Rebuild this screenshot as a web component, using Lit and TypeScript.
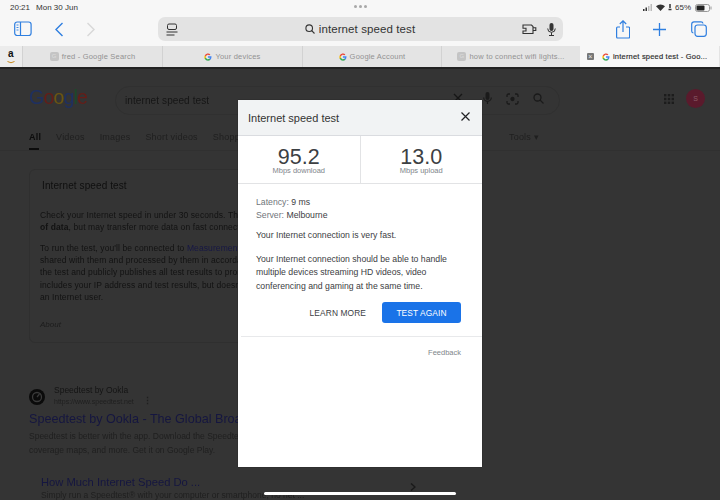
import { LitElement, html, css, svg } from "lit";
import { customElement } from "lit/decorators.js";

const gIcon = svg`<svg class="g" viewBox="0 0 24 24"><path fill="#4285f4" d="M22.5 12.2c0-.8-.1-1.500-.2-2.200H12v4.200h5.900a5 5 0 0 1-2.200 3.300v2.700h3.500c2.100-1.900 3.300-4.700 3.300-8z"/><path fill="#34a853" d="M12 23c3 0 5.400-1 7.200-2.700l-3.500-2.700c-1 .7-2.200 1.100-3.700 1.100-2.800 0-5.200-1.900-6.100-4.500H2.300V17A11 11 0 0 0 12 23z"/><path fill="#fbbc05" d="M5.900 14.200a6.600 6.600 0 0 1 0-4.200V7.200H2.300a11 11 0 0 0 0 9.900z"/><path fill="#ea4335" d="M12 5.400c1.600 0 3 .6 4.100 1.600l3.100-3.100A11 11 0 0 0 2.300 7.200l3.600 2.800C6.800 7.300 9.200 5.400 12 5.400z"/></svg>`;

@customElement("app-root")
export class AppRoot extends LitElement {
  static styles = css`
    :host { display: block; width: 720px; height: 500px; position: relative; overflow: hidden; font-family: "Liberation Sans", Arial, sans-serif; background: #343434; }
    .chrome { background: #f7f7f7; height: 46px; display: flex; flex-direction: column; }
    .status { height: 15px; display: flex; align-items: center; justify-content: space-between; padding: 0 8px 0 10px; font-size: 8px; color: #333; position: relative; }
    .status .left { display: flex; gap: 6px; }
    .dots { position: absolute; left: 354px; top: 5px; display: flex; gap: 2px; }
    .dots i { width: 3px; height: 3px; border-radius: 50%; background: #a8a8a8; }
    .status .right { display: flex; align-items: center; gap: 2px; color: #333; }
    .status .right span { margin-right: 2px; }
    .toolbar { display: flex; align-items: center; height: 28px; padding: 0 0 3px 14px; }
    .back { margin-left: 23px; }
    .fwd { margin-left: 22px; }
    .url { margin-left: 63px; width: 405px; height: 24px; border-radius: 7px; background: #e3e3e3; display: flex; align-items: center; padding: 0 7px 0 8px; box-sizing: border-box; font-size: 11.500px; color: #333; }
    .url .center { flex: 1; display: flex; align-items: center; justify-content: center; gap: 4px; padding-left: 20px; letter-spacing: 0.1px; }
    .url .end { display: flex; align-items: center; gap: 10px; }
    .actions { margin-left: 53px; display: flex; align-items: center; gap: 23px; }
    .actions svg:last-child { margin-left: 2px; }
    .tabs { display: flex; height: 21px; background: #e4e4e4; font-size: 7.500px; color: #929292; letter-spacing: 0.2px; }
    .tab { display: flex; align-items: center; justify-content: center; gap: 3px; border-left: 1px solid #d2d2d2; box-sizing: border-box; width: 140px; }
    .tab.amz { width: 22px; border-left: none; background: #ececec; font-weight: bold; color: #111; font-size: 10px; flex-direction: column; line-height: 8px; }
    .tab.amz svg { display: block; }
    .tab.wide { width: 139px; }
    .tab.active { width: 139px; background: #f7f7f7; color: #2a2a2a; border-left: none; justify-content: flex-start; padding-left: 7px; -webkit-text-stroke: 0.15px #2a2a2a; white-space: nowrap; }
    .tab.active .x { width: 7px; height: 7px; background: #777; border-radius: 1px; margin-right: 5px; color: #eee; font-size: 7px; line-height: 7px; text-align: center; -webkit-text-stroke: 0; }
    .g { width: 8px; height: 8px; flex: none; }
    .gray-fav { width: 9px; height: 9px; background: #c4c4c4; border-radius: 2px; color: #ddd; font-size: 6px; line-height: 9px; text-align: center; }
    .sep { height: 2px; background: #222; }

    .page { height: 432px; color: #1d1d1d; filter: blur(0.25px); overflow: hidden; padding-left: 29px; box-sizing: border-box; }
    .top { display: flex; align-items: center; height: 54px; padding-top: 4px; }
    .logo { font-size: 19.500px; letter-spacing: -0.8px; width: 86px; line-height: 1; flex: none; margin-top: -4px; }
    .logo span:nth-child(1), .logo span:nth-child(4) { color: #1f3060; }
    .logo span:nth-child(2), .logo span:nth-child(6) { color: #651d18; }
    .logo span:nth-child(3) { color: #6b5612; }
    .logo span:nth-child(5) { color: #1c4a2a; }
    .query { font-size: 10px; letter-spacing: 0.1px; color: #161616; box-sizing: border-box; width: 445px; height: 29px; line-height: 27px; padding-left: 9px; border: 1px solid #303030; border-radius: 15px; flex: none; }
    .top-icons { position: absolute; left: 483px; top: 92px; display: flex; align-items: center; gap: 14px; }
    .qx { position: absolute; left: 453px; top: 93px; }
    .apps { position: absolute; left: 664px; top: 94px; }
    .avatar { position: absolute; left: 686px; top: 89px; width: 19px; height: 19px; border-radius: 50%; background: #5a1a2c; color: #8a5a68; font-size: 7px; display: flex; align-items: center; justify-content: center; }
    .nav { display: flex; gap: 15px; font-size: 9px; color: #1f1f1f; letter-spacing: 0.2px; height: 19px; padding-bottom: 4px; align-items: center; position: relative; }
    .nav b { font-weight: bold; color: #0c0c0c; position: relative; }
    .nav b::after { content: ""; position: absolute; left: 0; width: 10px; height: 2px; top: 16px; background: #0c0c0c; }
    .tools { position: absolute; left: 480px; }
    .rule { height: 1px; background: #303030; margin: 0 0 0 -29px; }
    .card { margin-top: 18px; width: 430px; height: 174px; border: 1px solid #2f2f2f; border-radius: 6px; box-sizing: border-box; padding: 10px 10px 0 10px; font-size: 8.500px; color: #121212; white-space: nowrap; overflow: hidden; }
    .card h3 { font-weight: normal; font-size: 10px; margin: 0 0 0 2px; line-height: 12px; padding-bottom: 17px; color: #0f0f0f; letter-spacing: 0.1px; }
    .card p { margin: 0 0 8.600px; line-height: 12.200px; letter-spacing: 0.1px; }
    .card a { color: #161744; }
    .about { font-style: italic; font-size: 8px; margin-top: 17px; color: #1c1c1c; }
    .result { margin-top: 43px; display: flex; gap: 9px; align-items: center; height: 21px; }
    .logo-o { width: 16px; height: 16px; flex: none; }
    .site { font-size: 8.500px; line-height: 11px; color: #141414; margin-top: -2px; }
    .site small { display: flex; align-items: center; gap: 9px; font-size: 7px; color: #1f1f1f; line-height: 11px; }
    .dotsv { display: inline-block; font-size: 9px; font-weight: bold; line-height: 7px; width: 2px; }
    .title { font-size: 12.600px; color: #151640; margin-top: 4px; line-height: 16px; white-space: nowrap; }
    .desc { font-size: 8.500px; line-height: 13.500px; color: #1f1f1f; white-space: nowrap; margin-top: 3px; }
    .sub { margin: 18px 0 0 12px; font-size: 11.200px; color: #151640; line-height: 14px; }
    .sub + div { margin-left: 12px; font-size: 8.500px; color: #1f1f1f; line-height: 13px; white-space: nowrap; }
    .chev { position: absolute; left: 410px; top: 483px; }

    .modal { position: absolute; left: 238px; top: 100px; width: 244px; height: 367px; background: #fff; color: #3c4043; box-shadow: 0 0 1px rgba(0,0,0,.5); display: flex; flex-direction: column; }
    .mhead { height: 36px; flex: none; background: #f1f3f4; border-bottom: 1px solid #dadce0; display: flex; align-items: center; justify-content: space-between; padding: 1px 12px 0 10px; box-sizing: border-box; font-size: 11px; color: #333; }
    .mhead svg { margin-top: -4px; }
    .speeds { display: flex; height: 48px; flex: none; border-bottom: 1px solid #e2e3e5; box-sizing: border-box; }
    .speed { flex: 1; display: flex; flex-direction: column; align-items: center; padding-top: 12px; }
    .speed + .speed { border-left: 1px solid #e2e3e5; }
    .speed strong { font-weight: normal; font-size: 21.500px; line-height: 18px; color: #3c4043; }
    .speed span { font-size: 7.500px; line-height: 9px; color: #80868b; }
    .mbody { padding: 12px 18px 0; font-size: 8.700px; line-height: 12.500px; color: #3c4043; flex: none; }
    .mbody p { margin: 0; }
    .mbody .k { color: #70757a; }
    .mbody .mt1 { margin-top: 8px; }
    .mbody .mt2 { margin-top: 11px; line-height: 13.500px; }
    .btns { display: flex; justify-content: flex-end; align-items: center; gap: 16px; padding: 9px 21px 0 0; height: 21px; flex: none; box-sizing: content-box; }
    .learn { font-size: 8.400px; color: #3c4043; letter-spacing: 0.1px; }
    .again { width: 79px; height: 21px; border-radius: 3px; background: #1a73e8; color: #fff; font-size: 8.400px; display: flex; align-items: center; justify-content: center; letter-spacing: 0.1px; }
    .mdiv { height: 1px; background: #e8e9eb; margin: 13px 0 0 3px; flex: none; }
    .feedback { text-align: right; padding: 11px 21px 0 0; font-size: 7.500px; color: #80868b; }
    .home { position: absolute; left: 264px; top: 492px; width: 192px; height: 3px; border-radius: 2px; background: #fff; }
  `;

  render() {
    const blue = "#2f7fe0";
    return html`
      <div class="chrome">
        <div class="status">
          <div class="left"><span>20:21</span><span>Mon 30 Jun</span></div>
          <div class="dots"><i></i><i></i><i></i></div>
          <div class="right">
            <svg width="11" height="7" viewBox="0 0 11 7"><rect x="0" y="5" width="1.500" height="2" fill="#333"/><rect x="2.500" y="3.500" width="1.500" height="3.500" fill="#333"/><rect x="5" y="2" width="1.500" height="5" fill="#bbb"/><rect x="7.500" y="0" width="1.500" height="7" fill="#bbb"/></svg>
            <svg width="9" height="7" viewBox="0 0 9 7"><path d="M4.500 7 0 2.300a6.500 6.500 0 0 1 9 0z" fill="#333"/></svg>
            <svg width="6" height="7" viewBox="0 0 6 7"><path d="M3 0v4M1.500 5.500h3" stroke="#333" stroke-width="1.500" fill="none"/></svg>
            <span>65%</span>
            <svg width="17" height="8" viewBox="0 0 17 8"><rect x=".5" y=".5" width="14" height="7" rx="2" fill="none" stroke="#999"/><rect x="1.500" y="1.500" width="8" height="5" rx="1" fill="#222"/><rect x="15.500" y="2.500" width="1" height="3" fill="#999"/></svg>
          </div>
        </div>
        <div class="toolbar">
          <svg width="18" height="16" viewBox="0 0 18 16" fill="none" stroke="${blue}" stroke-width="1.200"><rect x=".7" y="1" width="16.400" height="13.500" rx="2.500"/><path d="M6.500 1v13.500"/><path d="M2.500 4h2M2.500 6.500h2M2.500 9h2" stroke-width=".9"/></svg>
          <svg class="back" width="9" height="15" viewBox="0 0 9 15" fill="none" stroke="${blue}" stroke-width="1.400"><path d="M7.500 1 1 7.500 7.500 14"/></svg>
          <svg class="fwd" width="9" height="15" viewBox="0 0 9 15" fill="none" stroke="#d8d8d8" stroke-width="1.400"><path d="M1.500 1 8 7.500 1.500 14"/></svg>
          <div class="url">
            <svg width="12" height="13" viewBox="0 0 12 13" fill="none" stroke="#333" stroke-width="1"><rect x="1.500" y="1" width="9" height="5.500" rx="1.500"/><path d="M.5 9h11M.5 12h8"/></svg>
            <div class="center">
              <svg width="10" height="10" viewBox="0 0 10 10" fill="none" stroke="#333" stroke-width="1.100"><circle cx="4.200" cy="4.200" r="3.300"/><path d="m6.700 6.700 2.800 2.800"/></svg>
              <span>internet speed test</span>
            </div>
            <div class="end">
              <svg width="15" height="11" viewBox="0 0 15 11" fill="none" stroke="#333" stroke-width="1.100"><path d="M1 1h8.500L11 2.500V9.500H1V7h3V4.200H1z"/><path d="M11 3.800h2.800v2.700H11"/></svg>
              <svg width="9" height="13" viewBox="0 0 9 13"><rect x="2.500" y="0" width="4" height="8" rx="2" fill="#333"/><path d="M.7 5.500a3.800 3.800 0 0 0 7.600 0M4.500 9.500V12M2 12.500h5" fill="none" stroke="#333"/></svg>
            </div>
          </div>
          <div class="actions">
            <svg width="14" height="19" viewBox="0 0 14 19" fill="none" stroke="${blue}" stroke-width="1.200"><path d="M7 12V1M3.800 4 7 .8 10.200 4"/><path d="M4 7H1.500a1 1 0 0 0-.9 1v9a1 1 0 0 0 1 1h11a1 1 0 0 0 1-1V8a1 1 0 0 0-1-1H10"/></svg>
            <svg width="13" height="13" viewBox="0 0 13 13" fill="none" stroke="${blue}" stroke-width="1.300"><path d="M6.500 0v13M0 6.500h13"/></svg>
            <svg width="16" height="16" viewBox="0 0 16 16" fill="none" stroke="${blue}" stroke-width="1.200"><rect x="4" y="4" width="11.300" height="11.300" rx="2.500"/><path d="M12 2.500A2 2 0 0 0 10 .8H3A2.400 2.400 0 0 0 .7 3v7a2 2 0 0 0 1.700 2"/></svg>
          </div>
        </div>
      </div>
      <div class="tabs">
        <div class="tab amz"><span>a</span><svg width="8" height="3" viewBox="0 0 8 3"><path d="M.5 .5q3.500 2.500 7 0" stroke="#c98a1e" fill="none"/></svg></div>
        <div class="tab"><span class="gray-fav">G</span>fred - Google Search</div>
        <div class="tab">${gIcon}Your devices</div>
        <div class="tab wide">${gIcon}Google Account</div>
        <div class="tab wide"><span class="gray-fav">G</span>how to connect wifi lights...</div>
        <div class="tab active"><span class="x">×</span>${gIcon}<span>internet speed test - Goo...</span></div>
      </div>
      <div class="sep"></div>

      <div class="page">
        <div class="top">
          <div class="logo"><span>G</span><span>o</span><span>o</span><span>g</span><span>l</span><span>e</span></div>
          <div class="query">internet speed test</div>
        </div>
        <div class="nav">
          <b>All</b><span>Videos</span><span>Images</span><span>Short videos</span><span>Shopping</span>
          <span class="tools">Tools ▾</span>
        </div>
        <div class="rule"></div>
        <div class="card">
          <h3>Internet speed test</h3>
          <p>Check your Internet speed in under 30 seconds. The test uses less than<br /><b>of data</b>, but may transfer more data on fast connections.</p>
          <p>To run the test, you'll be connected to <a>Measurement Lab</a> and your IP address is<br />shared with them and processed by them in accordance with their privacy policy.<br />the test and publicly publishes all test results to promote Internet research. This<br />includes your IP address and test results, but doesn't include any information about<br />an Internet user.</p>
          <div class="about">About</div>
        </div>
        <div class="result">
          <svg class="logo-o" viewBox="0 0 16 16"><circle cx="8" cy="8" r="8" fill="#0b0b0b"/><circle cx="8" cy="8" r="4.500" fill="none" stroke="#3a3a3a" stroke-width="1.300"/><path d="m8 8 2.500-3" stroke="#3a3a3a" stroke-width="1.200"/></svg>
          <div class="site">Speedtest by Ookla<small>https://www.speedtest.net <span class="dotsv">⋮</span></small></div>
        </div>
        <div class="title">Speedtest by Ookla - The Global Broadband Speed Test</div>
        <div class="desc">Speedtest is better with the app. Download the Speedtest app for real-time<br />coverage maps, and more. Get it on Google Play.</div>
        <div class="sub">How Much Internet Speed Do ...</div>
        <div>Simply run a Speedtest® with your computer or smartphone, no net ...</div>
      </div>
      <svg class="qx" width="10" height="10" viewBox="0 0 10 10" stroke="#161616" stroke-width="1.300"><path d="m1 1 8 8M9 1l-8 8"/></svg>
      <div class="top-icons">
        <svg width="9" height="13" viewBox="0 0 9 13"><rect x="2.500" y="0" width="4" height="8" rx="2" fill="#1a1a1a"/><path d="M.7 5.500a3.800 3.800 0 0 0 7.600 0M4.500 9.500V12" fill="none" stroke="#1a1a1a" stroke-width="1.200"/></svg>
        <svg width="13" height="12" viewBox="0 0 13 12" fill="none" stroke="#1a1a1a" stroke-width="1.300"><path d="M1 4V2.500A1.500 1.500 0 0 1 2.500 1H4M9 1h1.500A1.500 1.500 0 0 1 12 2.500V4M12 8v1.500a1.500 1.500 0 0 1-1.500 1.500H9M4 11H2.500A1.500 1.500 0 0 1 1 9.500V8"/><circle cx="6.500" cy="6" r="1.500" fill="#1a1a1a"/></svg>
        <svg width="11" height="11" viewBox="0 0 11 11" fill="none" stroke="#1a1a1a" stroke-width="1.300"><circle cx="4.500" cy="4.500" r="3.500"/><path d="m7 7 3.500 3.500"/></svg>
      </div>
      <svg class="apps" width="10" height="10" viewBox="0 0 10 10" fill="#1c1c1c"><rect x="0" y="0" width="2.400" height="2.400"/><rect x="3.800" y="0" width="2.400" height="2.400"/><rect x="7.600" y="0" width="2.400" height="2.400"/><rect x="0" y="3.800" width="2.400" height="2.400"/><rect x="3.800" y="3.800" width="2.400" height="2.400"/><rect x="7.600" y="3.800" width="2.400" height="2.400"/><rect x="0" y="7.600" width="2.400" height="2.400"/><rect x="3.800" y="7.600" width="2.400" height="2.400"/><rect x="7.600" y="7.600" width="2.400" height="2.400"/></svg>
      <div class="avatar">S</div>
      <svg class="chev" width="6" height="8" viewBox="0 0 6 8" fill="none" stroke="#1a1a1a" stroke-width="1.500"><path d="m1 .5 4 3.500-4 3.500"/></svg>

      <div class="modal">
        <div class="mhead">
          <span>Internet speed test</span>
          <svg width="9" height="9" viewBox="0 0 9 9" stroke="#202124" stroke-width="1.200"><path d="m.5.5 8 8M8.500.5l-8 8"/></svg>
        </div>
        <div class="speeds">
          <div class="speed"><strong>95.2</strong><span>Mbps download</span></div>
          <div class="speed"><strong>13.0</strong><span>Mbps upload</span></div>
        </div>
        <div class="mbody">
          <p><span class="k">Latency:</span> 9 ms</p>
          <p><span class="k">Server:</span> Melbourne</p>
          <p class="mt1">Your Internet connection is very fast.</p>
          <p class="mt2">Your Internet connection should be able to handle<br />multiple devices streaming HD videos, video<br />conferencing and gaming at the same time.</p>
        </div>
        <div class="btns"><span class="learn">LEARN MORE</span><div class="again">TEST AGAIN</div></div>
        <div class="mdiv"></div>
        <div class="feedback">Feedback</div>
      </div>
      <div class="home"></div>
    `;
  }
}
